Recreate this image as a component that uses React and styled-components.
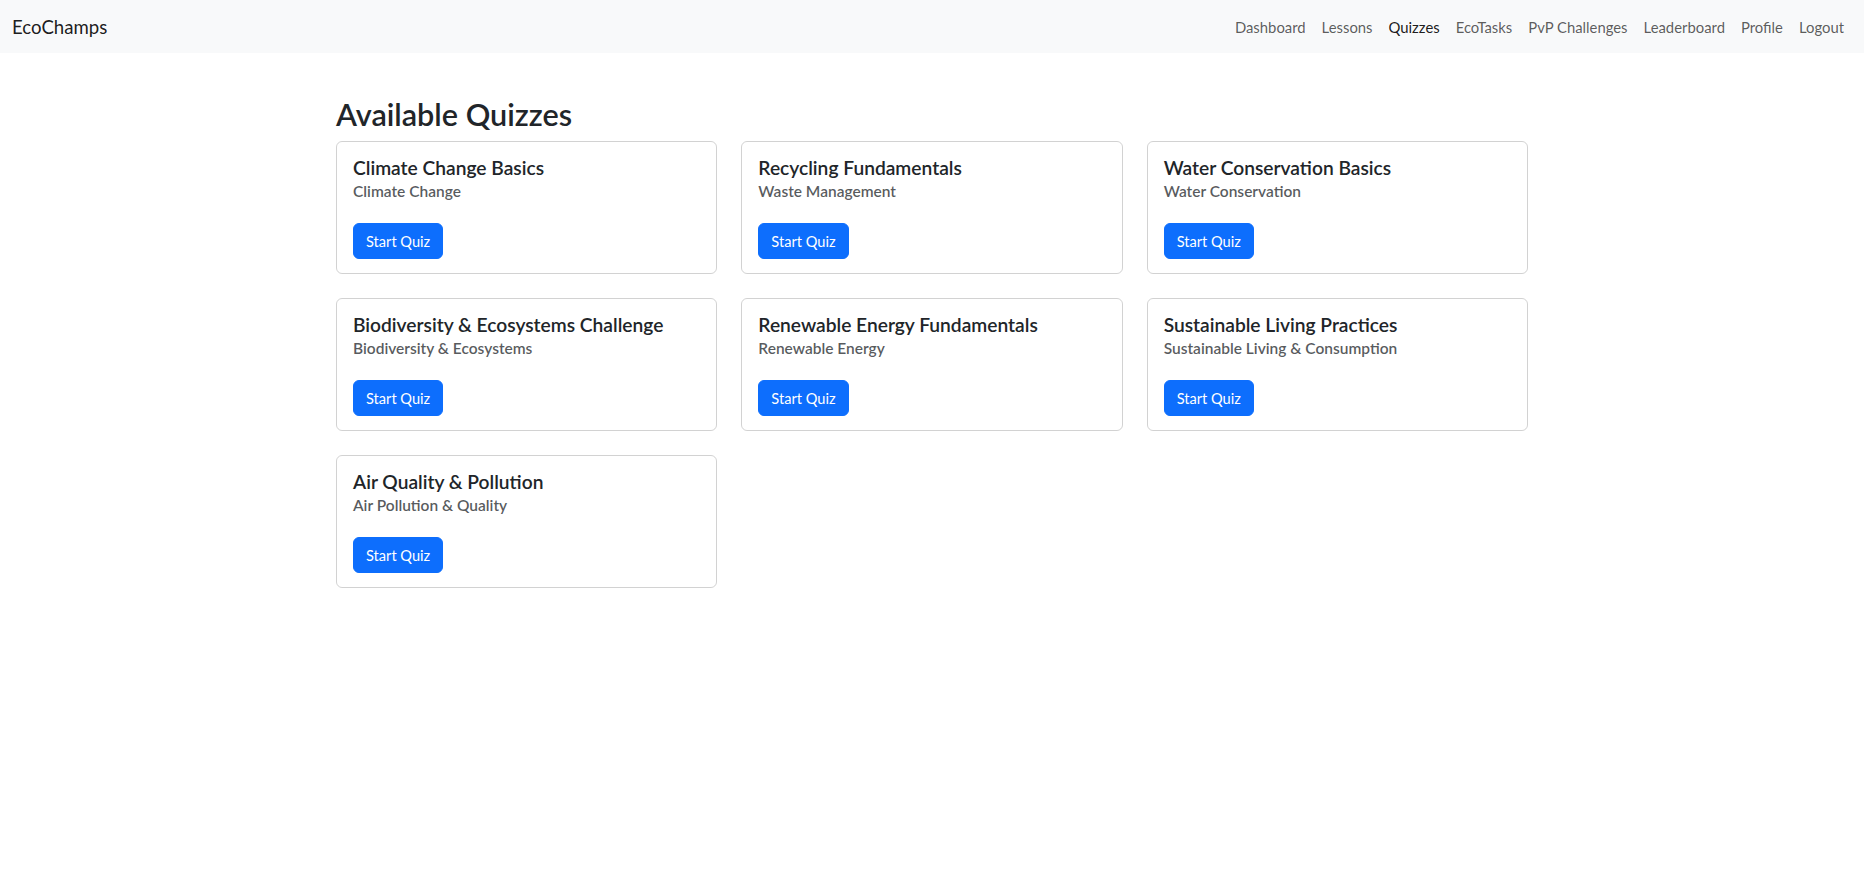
import styled, { createGlobalStyle } from "styled-components";

const GlobalStyle = createGlobalStyle`
  body {
    margin: 0;
    background: #ffffff;
    color: #212529;
    font-family: Lato, "Liberation Sans", sans-serif;
    font-size: 15px;
    line-height: 1.5;
  }
  * {
    box-sizing: border-box;
  }
`;

const quizzes = [
  { title: "Climate Change Basics", category: "Climate Change" },
  { title: "Recycling Fundamentals", category: "Waste Management" },
  { title: "Water Conservation Basics", category: "Water Conservation" },
  { title: "Biodiversity & Ecosystems Challenge", category: "Biodiversity & Ecosystems" },
  { title: "Renewable Energy Fundamentals", category: "Renewable Energy" },
  { title: "Sustainable Living Practices", category: "Sustainable Living & Consumption" },
  { title: "Air Quality & Pollution", category: "Air Pollution & Quality" },
];

const links = ["Dashboard", "Lessons", "Quizzes", "EcoTasks", "PvP Challenges", "Leaderboard", "Profile", "Logout"];

export default function App() {
  return (
    <>
      <GlobalStyle />
      <NavBar>
        <Brand href="#">EcoChamps</Brand>
        <NavList>
          {links.map((l) => (
            <NavLink key={l} href="#" $active={l === "Quizzes"}>
              {l}
            </NavLink>
          ))}
        </NavList>
      </NavBar>
      <Container>
        <Heading>Available Quizzes</Heading>
        <Grid>
          {quizzes.map((q) => (
            <Card key={q.title}>
              <CardTitle>{q.title}</CardTitle>
              <CardSubtitle>{q.category}</CardSubtitle>
              <StartButton>Start Quiz</StartButton>
            </Card>
          ))}
        </Grid>
      </Container>
    </>
  );
}

const NavBar = styled.nav`
  background-color: #f8f9fa;
  height: 53px;
  padding: 0 12px;
  display: flex;
  align-items: center;
  justify-content: space-between;
`;

const Brand = styled.a`
  font-size: 18.6px;
  color: rgba(0, 0, 0, 0.9);
  text-decoration: none;
  line-height: 30px;
`;

const NavList = styled.div`
  display: flex;
  align-items: center;
`;

const NavLink = styled.a`
  padding: 8px;
  font-size: 14.85px;
  line-height: 24px;
  text-decoration: none;
  color: ${(p) => (p.$active ? "rgba(0, 0, 0, 0.9)" : "rgba(0, 0, 0, 0.65)")};
`;

const Container = styled.main`
  max-width: 1192px;
  margin: 0 auto;
  padding-top: 44px;
`;

const Heading = styled.h2`
  margin: 0 0 8px;
  font-size: 30.6px;
  font-weight: 600;
  line-height: 36px;
`;

const Grid = styled.div`
  display: grid;
  grid-template-columns: repeat(3, 1fr);
  gap: 24px;
`;

const Card = styled.div`
  border: 1px solid rgba(0, 0, 0, 0.175);
  border-radius: 6px;
  padding: 14px 16px 14px;
  display: flex;
  flex-direction: column;
  align-items: flex-start;
`;

const CardTitle = styled.h5`
  margin: 0 0 2px;
  font-size: 19.2px;
  font-weight: 600;
  line-height: 24px;
`;

const CardSubtitle = styled.h6`
  margin: 0;
  font-size: 15.5px;
  font-weight: 600;
  line-height: 19px;
  color: rgba(33, 37, 41, 0.75);
`;

const StartButton = styled.button`
  margin-top: 22px;
  height: 36px;
  padding: 0 12px;
  font-family: inherit;
  font-size: 14.6px;
  color: #ffffff;
  background-color: #0d6efd;
  border: 1px solid #0d6efd;
  border-radius: 6px;
  cursor: pointer;
`;
